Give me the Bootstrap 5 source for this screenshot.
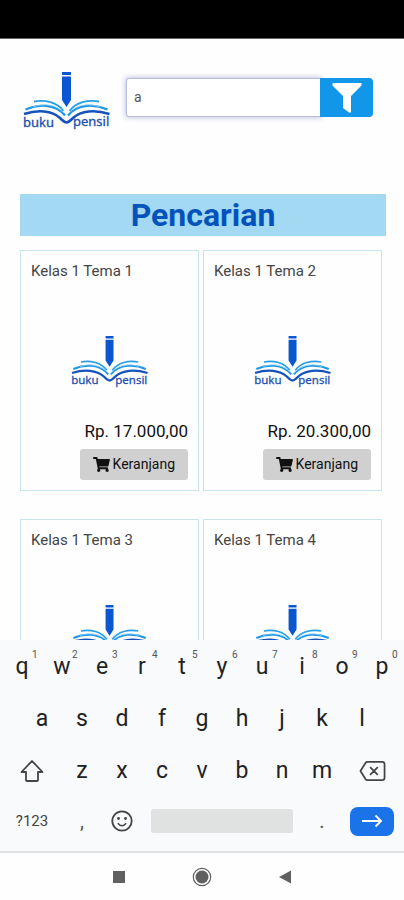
<!DOCTYPE html>
<html lang="id">
<head>
<meta charset="utf-8">
<meta name="viewport" content="width=device-width, initial-scale=1">
<title>Buku Pensil – Pencarian</title>
<link rel="stylesheet" href="https://cdn.jsdelivr.net/npm/bootstrap@5.3.0/dist/css/bootstrap.min.css">
<style>
body { font-family: Roboto, "Liberation Sans", sans-serif; background: #fefefe; }
.status-bar { height: 39px; background: #000; border-bottom: 1px solid #666; }
.page-scroll { min-height: 0; scrollbar-width: none; }
.page-scroll::-webkit-scrollbar { display: none; }
.site-head { padding: 32px 31px 0 23px; gap: 15px; }
.head-logo { width: 88px; height: 60px; }
.search-group { margin-top: 7px; height: 39px; }
.search-group .form-control { font-size: 14px; padding: 0 7px; color: #555; border: 1px solid #b9bbdc; border-radius: 3px; box-shadow: 0 0 5px 1px #c3c6e2; }
.search-group .btn { width: 53px; background: #1296ea; border-radius: 0 4px 4px 0; }
.results { padding: 63px 18px 0 20px; }
.results-title { background: #a3d9f2; color: #0453bd; font-size: 32px; line-height: 42px; font-weight: 700; margin: 0 0 14px; }
.product-grid { row-gap: 28px; column-gap: 4px; padding-right: 4px; display: grid; grid-template-columns: 1fr 1fr; }
.product { border: 1px solid #c5e6ea; padding: 10px; }
.product-name { font-size: 15px; line-height: 20px; font-weight: 400; color: #444; margin: 0; }
.product-logo { width: 78px; height: 53px; margin: 54px 0 31px; }
.product-price { font-size: 17px; line-height: 24px; font-weight: 400; color: #111; margin-bottom: 6px; }
.cart-btn { background: #d0d0d0; color: #111; font-size: 14px; line-height: 21px; padding: 5px 13px; border-radius: 3px; gap: 3px; }
.keyboard { background: #f8fafc; border-bottom: 2px solid #e0e1e2; padding: 1px 2px 6px; }
.key-row { height: 52px; }
.key-row.inset { padding: 0 5%; }
.key-row.bottom { height: 48px; }
.key { flex: 2 1 0; min-width: 0; border: 0; background: none; padding: 0; color: #222; font-size: 23px; line-height: 28px; display: flex; align-items: center; justify-content: center; }
.key.wide { flex-grow: 3; }
.key.space { flex-grow: 8; }
.key.space span { flex: 1; margin: 0 9px; height: 24px; background: #e0e2e1; border-radius: 3px; }
.key sup { position: absolute; top: 9px; left: 50%; margin-left: 10px; font-size: 10px; line-height: 10px; color: #555; }
.key.label-key { font-size: 15px; color: #444; }
.key.faint { color: #555; font-size: 20px; }
.enter-pill { width: 44px; height: 29px; border-radius: 8px; background: #1a73e8; display: flex; align-items: center; justify-content: center; }
.system-nav { height: 47px; gap: 66px; background: #fefefe; }
.system-nav .btn { line-height: 0; }
</style>
<script src="https://cdn.jsdelivr.net/npm/bootstrap@5.3.0/dist/js/bootstrap.bundle.min.js"></script>
</head>
<body>
<svg class="d-none" aria-hidden="true">
  <symbol id="logo" viewBox="0 0 88 60">
    <path d="M39 1h9v3h-9zM39 5.500h9V29l-4.500 7L39 29z" fill="#0b57cf"/>
    <g fill="none" stroke-linecap="butt">
      <path d="M11 30.500C22 28.500 34 31 40.500 40M76 30.500C65 28.500 53 31 46.500 40" stroke="#2b9fe6" stroke-width="1.800"/>
      <path d="M2.500 38.500C15 33 32 32.500 42 44.500M84.500 38.500C72 33 55 32.500 45 44.500" stroke="#1d97e8" stroke-width="2.200"/>
      <path d="M10 36C20 32 33 33 41 42M77 36C67 32 54 33 46 42" stroke="#8fd0f5" stroke-width=".8"/>
      <path d="M1 43C15 38.500 29 39.500 37 47C41 51 42 51.500 43.500 51.500C45 51.500 46 51 50 47C58 39.500 72 38.500 86.500 43" stroke="#1553bb" stroke-width="2.600"/>
    </g>
    <g fill="#1c4fae" stroke="#1c4fae" stroke-width=".3" font-family="'Noto Sans', sans-serif" font-size="13">
      <text x="0" y="56">buku</text><text x="50" y="55">pensil</text>
    </g>
  </symbol>
  <symbol id="cart" viewBox="0 0 576 512">
    <path fill="currentColor" d="M528.120 301.319l47.273-208C578.806 78.301 567.391 64 551.990 64H159.208l-9.166-44.810C147.758 8.021 137.930 0 126.529 0H24C10.745 0 0 10.745 0 24v16c0 13.255 10.745 24 24 24h69.883l70.248 343.435C147.325 417.100 136 435.222 136 456c0 30.928 25.072 56 56 56s56-25.072 56-56c0-15.674-6.447-29.835-16.824-40h209.647C430.447 426.165 424 440.326 424 456c0 30.928 25.072 56 56 56s56-25.072 56-56c0-22.172-12.888-41.332-31.579-50.405l5.517-24.276c3.413-15.018-8.002-29.319-23.403-29.319H218.117l-6.545-32h293.145c11.206 0 20.920-7.754 23.403-18.681z"/>
  </symbol>
</svg>

<div class="vh-100 d-flex flex-column overflow-hidden">
  <div class="status-bar flex-shrink-0"></div>

  <div class="page-scroll flex-grow-1 overflow-auto">
    <header class="site-head d-flex align-items-start">
      <a href="#" class="d-block lh-1 flex-shrink-0" aria-label="buku pensil"><svg class="head-logo"><use href="#logo"/></svg></a>
      <form class="search-group input-group flex-nowrap">
        <input type="text" class="form-control" value="a" aria-label="Cari buku">
        <button type="button" class="btn p-0 border-0" aria-label="Filter">
          <svg width="30" height="31" viewBox="0 0 30 31"><path d="M.5 1h29v2.500L19 14v16.500h-2L11 26V14L.5 3.500z" fill="#fff"/></svg>
        </button>
      </form>
    </header>

    <main class="results">
      <h1 class="results-title text-center">Pencarian</h1>
      <div class="product-grid">
        <article class="product d-flex flex-column">
          <h2 class="product-name">Kelas 1 Tema 1</h2>
          <svg class="product-logo align-self-center"><use href="#logo"/></svg>
          <div class="product-price text-end">Rp. 17.000,00</div>
          <button type="button" class="cart-btn btn border-0 align-self-end d-flex align-items-center"><svg width="17" height="15"><use href="#cart"/></svg>Keranjang</button>
        </article>
        <article class="product d-flex flex-column">
          <h2 class="product-name">Kelas 1 Tema 2</h2>
          <svg class="product-logo align-self-center"><use href="#logo"/></svg>
          <div class="product-price text-end">Rp. 20.300,00</div>
          <button type="button" class="cart-btn btn border-0 align-self-end d-flex align-items-center"><svg width="17" height="15"><use href="#cart"/></svg>Keranjang</button>
        </article>
        <article class="product d-flex flex-column">
          <h2 class="product-name">Kelas 1 Tema 3</h2>
          <svg class="product-logo align-self-center"><use href="#logo"/></svg>
        </article>
        <article class="product d-flex flex-column">
          <h2 class="product-name">Kelas 1 Tema 4</h2>
          <svg class="product-logo align-self-center"><use href="#logo"/></svg>
        </article>
      </div>
    </main>
  </div>

  <div class="keyboard flex-shrink-0">
    <div class="key-row d-flex">
      <button type="button" class="key position-relative">q<sup>1</sup></button>
      <button type="button" class="key position-relative">w<sup>2</sup></button>
      <button type="button" class="key position-relative">e<sup>3</sup></button>
      <button type="button" class="key position-relative">r<sup>4</sup></button>
      <button type="button" class="key position-relative">t<sup>5</sup></button>
      <button type="button" class="key position-relative">y<sup>6</sup></button>
      <button type="button" class="key position-relative">u<sup>7</sup></button>
      <button type="button" class="key position-relative">i<sup>8</sup></button>
      <button type="button" class="key position-relative">o<sup>9</sup></button>
      <button type="button" class="key position-relative">p<sup>0</sup></button>
    </div>
    <div class="key-row inset d-flex">
      <button type="button" class="key">a</button>
      <button type="button" class="key">s</button>
      <button type="button" class="key">d</button>
      <button type="button" class="key">f</button>
      <button type="button" class="key">g</button>
      <button type="button" class="key">h</button>
      <button type="button" class="key">j</button>
      <button type="button" class="key">k</button>
      <button type="button" class="key">l</button>
    </div>
    <div class="key-row d-flex">
      <button type="button" class="key wide" aria-label="Shift"><svg width="24" height="24" viewBox="0 0 24 24" fill="none" stroke="#444" stroke-width="1.800" stroke-linejoin="round"><path d="M12 2L1.500 13H6v8q0 1 1 1h10q1 0 1-1v-8h4.500z"/></svg></button>
      <button type="button" class="key">z</button>
      <button type="button" class="key">x</button>
      <button type="button" class="key">c</button>
      <button type="button" class="key">v</button>
      <button type="button" class="key">b</button>
      <button type="button" class="key">n</button>
      <button type="button" class="key">m</button>
      <button type="button" class="key wide" aria-label="Hapus"><svg width="27" height="22" viewBox="0 0 28 22" fill="none" stroke="#444" stroke-width="1.800" stroke-linejoin="round"><path d="M8.500 1.500H24q2.500 0 2.500 2.500v14q0 2.500-2.500 2.500H8.500q-1 0-1.600-.9L1.500 11l5.400-8.600q.6-.9 1.600-.9zM11.500 7l8 8M19.500 7l-8 8"/></svg></button>
    </div>
    <div class="key-row bottom d-flex">
      <button type="button" class="key wide label-key">?123</button>
      <button type="button" class="key faint">,</button>
      <button type="button" class="key" aria-label="Emoji"><svg width="22" height="22" viewBox="0 0 22 22"><g fill="none" stroke="#444" stroke-width="1.800"><circle cx="11" cy="11" r="9.700"/><path d="M6.800 13.300q4.200 5 8.400 0" stroke-width="1.500"/></g><g fill="#444"><circle cx="7.500" cy="8.500" r="1.400"/><circle cx="14.500" cy="8.500" r="1.400"/></g></svg></button>
      <button type="button" class="key space" aria-label="Spasi"><span></span></button>
      <button type="button" class="key faint">.</button>
      <button type="button" class="key wide" aria-label="Enter"><span class="enter-pill"><svg width="22" height="14" viewBox="0 0 22 14" fill="none" stroke="#fff" stroke-width="1.900"><path d="M1 7h19M14.500 1.500L20 7l-5.500 5.500"/></svg></span></button>
    </div>
  </div>

  <nav class="system-nav flex-shrink-0 d-flex align-items-center justify-content-center" aria-label="Navigasi sistem">
    <button type="button" class="btn p-0 border-0" aria-label="Aplikasi terbaru"><svg width="14" height="14" viewBox="0 0 14 14"><path d="M1 1h12v12H1z" fill="#606060"/></svg></button>
    <button type="button" class="btn p-0 border-0" aria-label="Beranda"><svg width="20" height="20" viewBox="0 0 20 20"><circle cx="10" cy="10" r="8.700" fill="none" stroke="#606060" stroke-width="1.200"/><circle cx="10" cy="10" r="6.500" fill="#606060"/></svg></button>
    <button type="button" class="btn p-0 border-0" aria-label="Kembali"><svg width="14" height="14" viewBox="0 0 14 14"><path d="M1 7l12-6.500v13z" fill="#606060"/></svg></button>
  </nav>
</div>
</body>
</html>
